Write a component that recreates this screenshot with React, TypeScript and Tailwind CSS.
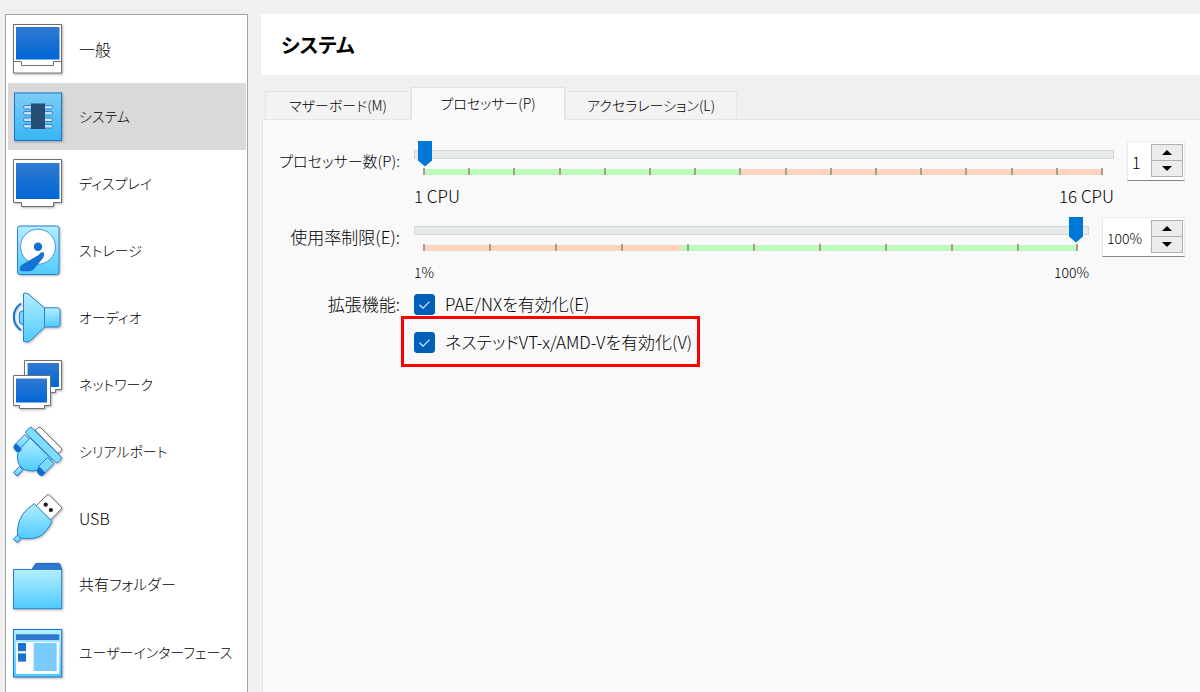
import { ReactNode, useState } from 'react';
import { clsx } from 'clsx';

const Gradients = () => (
  <svg className="absolute size-0" aria-hidden="true">
    <defs>
      <linearGradient id="screen" x1="0" y1="0" x2="0" y2="1">
        <stop offset="0" stopColor="#3079d0" />
        <stop offset="1" stopColor="#0066d6" />
      </linearGradient>
      <linearGradient id="cyan" x1="0" y1="0" x2="0" y2="1">
        <stop offset="0" stopColor="#b4efff" />
        <stop offset="1" stopColor="#4fcbff" />
      </linearGradient>
      <linearGradient id="chip" x1="0" y1="0" x2="0" y2="1">
        <stop offset="0" stopColor="#7bcdf4" />
        <stop offset="1" stopColor="#37b5f4" />
      </linearGradient>
    </defs>
  </svg>
);

const Icon = ({ children }: { children: ReactNode }) => (
  <svg
    viewBox="0 0 51 51"
    className="size-[51px] shrink-0 overflow-visible drop-shadow-[1px_1px_1px_rgba(0,0,0,0.3)]"
    aria-hidden="true"
  >
    {children}
  </svg>
);

const GeneralIcon = () => (
  <Icon>
    <rect x="0.5" y="0.5" width="48" height="48.5" fill="#fff" stroke="#707070" />
    <rect x="3" y="3" width="43.5" height="32.5" fill="url(#screen)" />
    <path d="M0.5 37.5H8.5V41.5H40.5V37.5H48.5" fill="none" stroke="#707070" />
  </Icon>
);

const SystemIcon = () => (
  <Icon>
    <rect x="1.5" y="2" width="47" height="47.5" fill="url(#chip)" stroke="#1c76d6" />
    {[14.5, 20.5, 27, 33.5].map((y) => (
      <rect key={y} x="10.5" y={y} width="29" height="3.5" rx="1.5" fill="#c3e2fb" stroke="#3a86c8" />
    ))}
    <rect x="18" y="12.5" width="14" height="25.5" fill="#264d73" />
  </Icon>
);

const DisplayIcon = () => (
  <Icon>
    <path d="M0.5 1.5H48.5V44.5H40.5V48.5H8.5V44.5H0.5Z" fill="#fff" stroke="#707070" />
    <rect x="3" y="5" width="43.5" height="36" fill="url(#screen)" />
  </Icon>
);

const StorageIcon = () => (
  <Icon>
    <rect x="4.5" y="1" width="41.5" height="48.5" rx="2.5" fill="url(#cyan)" stroke="#2a80d4" />
    <circle cx="25" cy="21.7" r="17.5" fill="#fff" stroke="#4a95dc" />
    <circle cx="25" cy="21.7" r="4.2" fill="#1472d2" />
    <path d="M25.5 30Q29 26 30.5 27.5Q32 29 30 33L21 44Q19 46.3 16 46.3H8.5Q6.8 46 6.8 42.5Q7 40.8 9 39.8Z" fill="#1472d2" />
  </Icon>
);

const AudioIcon = () => (
  <Icon>
    <path d="M8 11.5Q0.8 16.5 0.8 25Q0.8 33 8 38.3" fill="none" stroke="#1472d2" strokeWidth="2" />
    <path d="M10.5 19H8.5Q6.3 19.5 6.3 22V29Q6.3 31.5 8.5 32H10.5Z" fill="#6fd8ff" stroke="#1c76d6" />
    <path d="M10.5 1.5Q13 0.6 15 1.8L31.5 16V35L17.5 48.5Q14.5 51 10.5 49.3Z" fill="url(#cyan)" stroke="#2a80d4" />
    <path d="M31.5 15.8H44.5Q47 16 47 18.5V32.5Q47 35 44.5 35H31.5Z" fill="url(#cyan)" stroke="#2a80d4" />
  </Icon>
);

const NetworkIcon = () => (
  <Icon>
    <path d="M11.5 1.5H48.5V30.5H42.5V33.5H17.5V30.5H11.5Z" fill="#fff" stroke="#707070" />
    <rect x="14.5" y="4" width="31.5" height="24" fill="url(#screen)" />
    <path d="M0.5 16.5H37.5V46.5H31.5V49.5H6.5V46.5H0.5Z" fill="#fff" stroke="#707070" />
    <rect x="3" y="19.5" width="31" height="24" fill="url(#screen)" />
  </Icon>
);

const SerialIcon = () => (
  <Icon>
    <path d="M22 4L26 1.2Q27 1 28 2L48.2 22Q49.2 23.3 48.2 24.5L45 27.5Z" fill="#fff" stroke="#707070" />
    <path d="M11.8 8.5L18.5 15L8.5 25L2 18.5Z" fill="url(#cyan)" stroke="#2a80d4" />
    <path d="M0.6 46.5L6.5 40.5L10 43.8L4 50Z" fill="url(#cyan)" stroke="#1c76d6" />
    <path d="M17 12L38.7 33.2L31.5 41Q22 47.5 11.5 43.5Q4.5 40 4.5 31Q4.3 27 6.5 23.5Z" fill="url(#cyan)" stroke="#2a80d4" />
    <path d="M3 17.2L9 23.2L6.2 26.2Q3.2 26.5 1.8 24Q-0.2 22.5 0.4 20.3Z" fill="#0f6bd3" />
    <path d="M34.5 31.5L41 37.5L31.5 47L25 41Z" fill="#7cdaff" stroke="#2a80d4" />
    <path d="M26.5 40.8L32.6 46.8L29.5 49.8Q27.5 50.6 26 48.8Q23.5 47 24.2 43.2Z" fill="#0f6bd3" />
    <path d="M16.5 1.8Q17.8 0.6 19 1.8L48 30.8Q49 32 48 33.2L45 36.4Q43.8 37.2 42.6 36.2L13 7.3Q12.2 6.3 13 5.3Z" fill="#80dcff" stroke="#2a80d4" />
  </Icon>
);

const UsbIcon = () => (
  <Icon>
    <path d="M23 13L34 2Q35.2 1 36.4 2L48.2 14Q49.2 15.2 48.2 16.2L37.5 27Z" fill="#fff" stroke="#707070" />
    <circle cx="32.7" cy="11.7" r="2.1" fill="#181818" />
    <circle cx="37.9" cy="17" r="2.1" fill="#181818" />
    <path d="M0.6 46L5 41.6L8.4 45.2L4 49.6Z" fill="url(#cyan)" stroke="#1c76d6" />
    <path d="M21.3 10.8L39 28.3Q34 39 26.5 43.5Q18 47 7 45Q4 43.5 4.5 36Q6 20 21.3 10.8Z" fill="url(#cyan)" stroke="#2a80d4" />
  </Icon>
);

const FolderIcon = () => (
  <Icon>
    <path d="M18.5 10L22.5 3.8Q23 3.4 24 3.4H45.5Q46.8 3.4 47 4.4L48.7 10Z" fill="#2f76ce" stroke="#1c66c2" />
    <rect x="0.5" y="9.5" width="48.2" height="39.2" fill="url(#cyan)" stroke="#2a80d4" />
  </Icon>
);

const InterfaceIcon = () => (
  <Icon>
    <rect x="0.5" y="2.5" width="48.2" height="47.5" fill="url(#cyan)" stroke="#1c76d6" />
    <rect x="3" y="7.3" width="43.2" height="5.7" fill="#2f76ce" />
    <rect x="3" y="15" width="43.2" height="32" fill="#fff" />
    <rect x="5" y="16" width="8" height="8.2" fill="#1c70d0" />
    <rect x="5" y="26.4" width="8" height="8.2" fill="#1c70d0" />
    <rect x="20.7" y="16" width="23" height="28" fill="#7accff" />
  </Icon>
);

// Katakana runs wide, so those labels are set smaller than kanji and Latin ones
const categories = [
  { label: '一般', icon: <GeneralIcon />, size: 'text-base' },
  { label: 'システム', icon: <SystemIcon />, size: 'text-sm' },
  { label: 'ディスプレイ', icon: <DisplayIcon />, size: 'text-sm' },
  { label: 'ストレージ', icon: <StorageIcon />, size: 'text-sm' },
  { label: 'オーディオ', icon: <AudioIcon />, size: 'text-sm' },
  { label: 'ネットワーク', icon: <NetworkIcon />, size: 'text-sm' },
  { label: 'シリアルポート', icon: <SerialIcon />, size: 'text-sm' },
  { label: 'USB', icon: <UsbIcon />, size: 'text-base' },
  { label: '共有フォルダー', icon: <FolderIcon />, size: 'text-[15px]' },
  { label: 'ユーザーインターフェース', icon: <InterfaceIcon />, size: 'text-sm' },
];

const tabs = ['マザーボード(M)', 'プロセッサー(P)', 'アクセラレーション(L)'];

const GREEN = '#bffabd';
const ORANGE = '#fcd3bf';

interface SliderRowProps {
  id: string;
  label: string;
  labelSize: string;
  min: number;
  max: number;
  step: number;
  split: number;
  colors: [string, string];
  value: number;
  onChange: (value: number) => void;
  minLabel: string;
  maxLabel: string;
  suffix?: string;
}

const SliderRow = ({
  id, label, labelSize, min, max, step, split, colors, value, onChange, minLabel, maxLabel, suffix = '',
}: SliderRowProps) => {
  const ticks: number[] = [];
  for (let v = min; v < max; v += step) ticks.push(v);
  ticks.push(max);
  const percent = (v: number) => ((v - min) / (max - min)) * 100;
  const change = (v: number) => onChange(Math.min(max, Math.max(min, v)));

  return (
    <div className="flex items-start">
      <label htmlFor={id} className={clsx('mt-2 w-[137px] shrink-0 text-right', labelSize, 'leading-6')}>
        {label}
      </label>
      <div className="ml-3.5 min-w-0 flex-1">
        <input
          id={id}
          type="range"
          min={min}
          max={max}
          value={value}
          onChange={(e) => change(Number(e.target.value))}
          className="block h-[26px] w-full appearance-none bg-transparent [&::-webkit-slider-runnable-track]:h-[9px] [&::-webkit-slider-runnable-track]:border [&::-webkit-slider-runnable-track]:border-[#d6d6d6] [&::-webkit-slider-runnable-track]:bg-[#e6eaea] [&::-webkit-slider-thumb]:-mt-[10px] [&::-webkit-slider-thumb]:h-[26px] [&::-webkit-slider-thumb]:w-[22px] [&::-webkit-slider-thumb]:appearance-none [&::-webkit-slider-thumb]:bg-[#0078d7] [&::-webkit-slider-thumb]:[clip-path:polygon(3px_0,17px_0,17px_20px,10px_26px,3px_20px)]"
        />
        <div className="relative mr-3 ml-2.5 mt-0.5 h-1.5">
          <div className="flex h-full">
            <div style={{ width: `${percent(split)}%`, backgroundColor: colors[0] }} />
            <div className="flex-1" style={{ backgroundColor: colors[1] }} />
          </div>
          {ticks.map((v) => (
            <span
              key={v}
              className="absolute bottom-0 -ml-px h-[7px] w-0.5 bg-[#a3a08e]"
              style={{ left: `${percent(v)}%` }}
            />
          ))}
        </div>
        <div className={clsx('mt-2 flex justify-between pt-px', suffix ? 'text-sm' : 'text-[17px]', 'leading-6')}>
          <span>{minLabel}</span>
          <span>{maxLabel}</span>
        </div>
      </div>
      <div className="mr-[15px] ml-[13px] flex h-10 shrink-0 items-start border border-[#ececec] border-b-[#868686] bg-white pt-0.5 pr-px">
        <input
          type="text"
          aria-label={label}
          value={`${value}${suffix}`}
          onChange={(e) => change(parseInt(e.target.value, 10) || min)}
          className={clsx('h-9 bg-transparent pl-1 outline-none', suffix ? 'w-12 text-sm' : 'w-[23px] text-base')}
        />
        <div className="flex w-8 flex-col border border-[#b0b0b0] bg-[#ececec]">
          <button
            type="button"
            aria-label={`${label} +`}
            onClick={() => change(value + 1)}
            className="flex h-4 items-center justify-center border-b border-[#b0b0b0]"
          >
            <svg viewBox="0 0 10 5" className="h-[5px] w-2.5"><path d="M5 0L10 5H0Z" /></svg>
          </button>
          <button
            type="button"
            aria-label={`${label} -`}
            onClick={() => change(value - 1)}
            className="flex h-[15px] items-center justify-center"
          >
            <svg viewBox="0 0 10 5" className="h-[5px] w-2.5"><path d="M5 5L0 0H10Z" /></svg>
          </button>
        </div>
      </div>
    </div>
  );
};

interface CheckOptionProps {
  label: string;
  highlighted?: boolean;
}

const CheckOption = ({ label, highlighted }: CheckOptionProps) => {
  const [checked, setChecked] = useState(true);

  return (
    <label className="relative flex h-6 w-fit items-center gap-2.5">
      <span className="relative block size-[21px]">
        <input
          type="checkbox"
          checked={checked}
          onChange={(e) => setChecked(e.target.checked)}
          className="block size-full appearance-none rounded-[3px] border border-[#005fb8] bg-white checked:bg-[#005fb8]"
        />
        <svg viewBox="0 0 21 21" className="pointer-events-none absolute inset-0" fill="none">
          <path d="M5.5 10.8L9 14.2L15.5 7.7" stroke="#dcebf8" strokeWidth="1.2" />
        </svg>
      </span>
      <span>{label}</span>
      {highlighted && (
        <span className="pointer-events-none absolute -top-3.5 -right-2 -bottom-[13px] -left-[13px] border-3 border-[#fe0000]" />
      )}
    </label>
  );
};

export default function App() {
  const [category, setCategory] = useState('システム');
  const [tab, setTab] = useState('プロセッサー(P)');
  const [cpus, setCpus] = useState(1);
  const [cap, setCap] = useState(100);

  return (
    <div className="flex h-screen gap-[13px] overflow-hidden bg-[#f0f0f0] pt-3.5 pl-[5px] font-['Noto_Sans_CJK_JP',sans-serif] text-base font-light text-black [font-feature-settings:'palt']">
      <Gradients />

      {/* Categories */}
      <nav className="w-[243px] shrink-0 overflow-hidden border border-b-0 border-[#a0a3a8] bg-white pt-px pr-px pl-0.5">
        {categories.map(({ label, icon, size }) => (
          <button
            key={label}
            type="button"
            onClick={() => setCategory(label)}
            className={clsx(
              'flex h-[67px] w-full items-center gap-[15px] pl-[5px] text-left whitespace-nowrap',
              label === category && 'bg-[#d9d9d9]',
            )}
          >
            {icon}
            <span className={clsx('pb-0.5', size)}>{label}</span>
          </button>
        ))}
      </nav>

      <main className="flex min-w-0 flex-1 flex-col">
        <h1 className="flex h-[61px] shrink-0 items-center bg-white pl-5 text-xl font-bold">{category}</h1>

        {/* Tabs */}
        <div role="tablist" className="mt-3 flex shrink-0 items-end pl-1">
          {tabs.map((name) => (
            <button
              key={name}
              type="button"
              role="tab"
              aria-selected={name === tab}
              onClick={() => setTab(name)}
              className={clsx(
                'border border-b-0 border-[#e4e4e4] pb-0.5 text-sm whitespace-nowrap first:w-[146px] last:w-[172px]',
                name === tab ? 'relative -mb-px h-[33px] w-[154px] bg-[#f9f9f9]' : 'h-7 bg-[#f3f3f3]',
              )}
            >
              {name}
            </button>
          ))}
        </div>

        <div role="tabpanel" className="ml-px flex-1 border-t border-l border-[#e4e4e4] bg-[#f9f9f9] pt-[21px]">
          <div className="flex flex-col gap-[9px]">
            <SliderRow
              id="cpus"
              label="プロセッサー数(P):"
              labelSize="text-[15px]"
              min={1}
              max={16}
              step={1}
              split={8}
              colors={[GREEN, ORANGE]}
              value={cpus}
              onChange={setCpus}
              minLabel="1 CPU"
              maxLabel="16 CPU"
            />
            <SliderRow
              id="cap"
              label="使用率制限(E):"
              labelSize="text-[17px]"
              min={1}
              max={100}
              step={10}
              split={40}
              colors={[ORANGE, GREEN]}
              value={cap}
              onChange={setCap}
              minLabel="1%"
              maxLabel="100%"
              suffix="%"
            />
          </div>

          {/* Extended features */}
          <div className="mt-2 flex text-[17px] leading-6">
            <span className="w-[137px] shrink-0 text-right">拡張機能:</span>
            <div className="ml-3.5 flex flex-col gap-3.5">
              <CheckOption label="PAE/NXを有効化(E)" />
              <CheckOption label="ネステッドVT-x/AMD-Vを有効化(V)" highlighted />
            </div>
          </div>
        </div>
      </main>
    </div>
  );
}
